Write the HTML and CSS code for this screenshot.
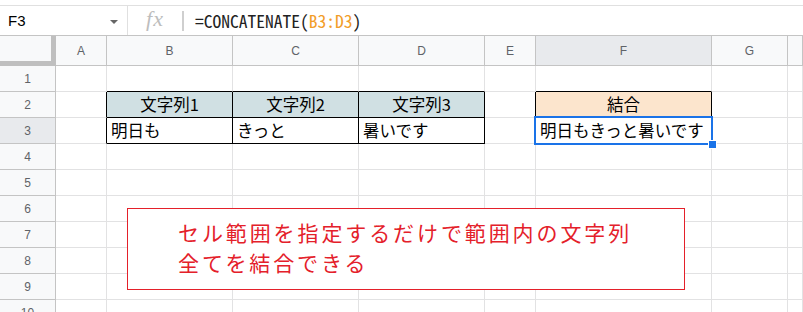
FILE: index.html
```html
<!DOCTYPE html>
<html lang="ja">
<head>
  <meta charset="UTF-8">
  <title>CONCATENATE</title>
  <link rel="stylesheet" href="styles.css">
</head>
<body>
<!-- Formula bar -->
<div class="formula-bar">
  <div class="name-box">
    <span>F3</span>
    <span class="caret"></span>
  </div>
  <div class="fx">fx</div>
  <div class="fx-sep"></div>
  <div class="formula">=CONCATENATE(<span class="ref">B3:D3</span>)</div>
</div>

<!-- Grid -->
<div class="sheet">
  <div class="row col-head">
    <div class="corner"></div>
    <div class="ch">A</div>
    <div class="ch">B</div>
    <div class="ch">C</div>
    <div class="ch">D</div>
    <div class="ch">E</div>
    <div class="ch active">F</div>
    <div class="ch">G</div>
    <div class="ch"></div>
  </div>

  <div class="row">
    <div class="rn">1</div>
    <div class="c"></div>
    <div class="c bb"></div>
    <div class="c bb"></div>
    <div class="c bb"></div>
    <div class="c"></div>
    <div class="c bb"></div>
    <div class="c"></div>
    <div class="c"></div>
  </div>

  <div class="row">
    <div class="rn">2</div>
    <div class="c rb"></div>
    <div class="c rb bb head">文字列1</div>
    <div class="c rb bb head">文字列2</div>
    <div class="c rb bb head">文字列3</div>
    <div class="c rb"></div>
    <div class="c rb bb head orange">結合</div>
    <div class="c"></div>
    <div class="c"></div>
  </div>

  <div class="row">
    <div class="rn active">3</div>
    <div class="c rb"></div>
    <div class="c rb bb">明日も</div>
    <div class="c rb bb">きっと</div>
    <div class="c rb bb">暑いです</div>
    <div class="c rb"></div>
    <div class="c rb bb selected">明日もきっと暑いです<span class="sel-box"></span><span class="handle"></span></div>
    <div class="c"></div>
    <div class="c"></div>
  </div>

  <div class="row"><div class="rn">4</div><div class="c"></div><div class="c"></div><div class="c"></div><div class="c"></div><div class="c"></div><div class="c"></div><div class="c"></div><div class="c"></div></div>
  <div class="row"><div class="rn">5</div><div class="c"></div><div class="c"></div><div class="c"></div><div class="c"></div><div class="c"></div><div class="c"></div><div class="c"></div><div class="c"></div></div>
  <div class="row"><div class="rn">6</div><div class="c"></div><div class="c"></div><div class="c"></div><div class="c"></div><div class="c"></div><div class="c"></div><div class="c"></div><div class="c"></div></div>
  <div class="row"><div class="rn">7</div><div class="c"></div><div class="c"></div><div class="c"></div><div class="c"></div><div class="c"></div><div class="c"></div><div class="c"></div><div class="c"></div></div>
  <div class="row"><div class="rn">8</div><div class="c"></div><div class="c"></div><div class="c"></div><div class="c"></div><div class="c"></div><div class="c"></div><div class="c"></div><div class="c"></div></div>
  <div class="row"><div class="rn">9</div><div class="c"></div><div class="c"></div><div class="c"></div><div class="c"></div><div class="c"></div><div class="c"></div><div class="c"></div><div class="c"></div></div>
  <div class="row"><div class="rn">10</div><div class="c"></div><div class="c"></div><div class="c"></div><div class="c"></div><div class="c"></div><div class="c"></div><div class="c"></div><div class="c"></div></div>

  <!-- Text box drawn over the grid -->
  <div class="note">
    セル範囲を指定するだけで範囲内の文字列<br>
    全てを結合できる
  </div>
</div>
</body>
</html>
```

FILE: styles.css
```css
* {
  margin: 0;
  padding: 0;
  box-sizing: border-box;
}

body {
  font-family: 'Liberation Sans', Arial, 'Noto Sans CJK JP', sans-serif;
  background: #fff;
  color: #000;
  overflow: hidden;
  padding-top: 5px;
}

/* Formula bar */
.formula-bar {
  display: flex;
  align-items: center;
  height: 31px;
  border-top: 1px solid #e0e0e0;
  border-bottom: 1px solid #c4c4c4;
}

.name-box {
  width: 128px;
  height: 100%;
  display: flex;
  align-items: center;
  justify-content: space-between;
  padding: 0 9px 0 8px;
  font-size: 15px;
  border-right: 1px solid #e0e0e0;
}

.caret {
  width: 0;
  height: 0;
  border-left: 4px solid transparent;
  border-right: 4px solid transparent;
  border-top: 4px solid #666;
  margin-top: 2px;
}

.fx {
  width: 54px;
  text-align: center;
  font-family: 'Liberation Serif', serif;
  font-style: italic;
  font-size: 22px;
  color: #bdbdbd;
  letter-spacing: 1px;
  margin-top: -3px;
}

.fx-sep {
  width: 2px;
  height: 20px;
  background: #cfcfcf;
}

.formula {
  margin-left: 11px;
  font-family: 'Noto Sans Mono CJK JP', 'Liberation Mono', monospace;
  font-size: 17.5px;
  color: #222;
}

.ref {
  color: #f29d28;
}

/* Grid */
.sheet {
  position: relative;
}

.row {
  display: grid;
  grid-template-columns: 56px 51px 126px 126px 126px 51px 176px 76px 1fr;
  height: 26px;
}

.col-head {
  height: 30px;
}

.corner {
  background: #f8f9fa;
  border-right: 5px solid #bfbfbf;
  border-bottom: 5px solid #bfbfbf;
}

.ch {
  background: #f8f9fa;
  border-right: 1px solid #c4c4c4;
  border-bottom: 1px solid #c4c4c4;
  color: #5f6368;
  font-size: 12px;
  display: flex;
  align-items: center;
  justify-content: center;
}

.ch.active,
.rn.active {
  background: #e8eaed;
}

.rn {
  background: #f8f9fa;
  border-right: 1px solid #c4c4c4;
  border-bottom: 1px solid #c4c4c4;
  color: #5f6368;
  font-size: 12px;
  display: flex;
  align-items: center;
  justify-content: center;
}

.c {
  position: relative;
  border-right: 1px solid #e2e2e3;
  border-bottom: 1px solid #e2e2e3;
  font-family: 'Noto Sans CJK JP', sans-serif;
  font-size: 16.5px;
  line-height: 25px;
  padding-left: 4px;
  white-space: nowrap;
}

.c.rb {
  border-right-color: #000;
}

.c.bb {
  border-bottom-color: #000;
}

.c.head {
  background: #d0e0e3;
  text-align: center;
  padding-left: 0;
}

.c.head.orange {
  background: #fce5cd;
}

.selected {
  z-index: 2;
}

.sel-box {
  position: absolute;
  top: -2px;
  left: -2px;
  right: -2px;
  bottom: -2px;
  border: 2px solid #1a73e8;
}

.handle {
  position: absolute;
  right: -6px;
  bottom: -6px;
  width: 9px;
  height: 9px;
  background: #1a73e8;
  border: 1px solid #fff;
}

/* Callout */
.note {
  position: absolute;
  top: 172px;
  left: 127px;
  width: 558px;
  height: 82px;
  background: #fff;
  border: 1.5px solid #e4202a;
  color: #e4202a;
  font-family: 'Noto Sans CJK JP', sans-serif;
  font-size: 21px;
  letter-spacing: 2.9px;
  line-height: 30px;
  padding: 8px 0 0 50px;
}
```
